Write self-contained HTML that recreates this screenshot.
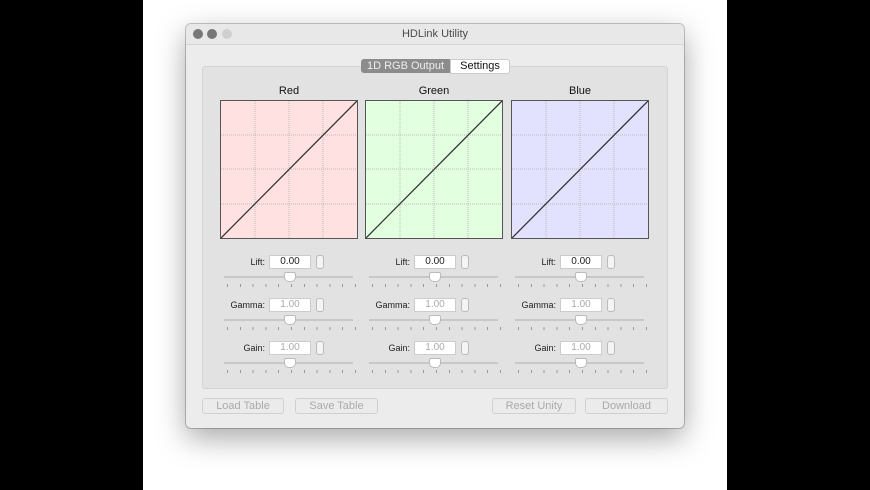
<html><head><style>
body{margin:0;width:870px;height:490px;background:#000;position:relative;overflow:hidden;font-family:"Liberation Sans",sans-serif;}
.a{position:absolute}
.white{left:143px;top:0;width:584px;height:490px;background:#fff}
.win{left:186px;top:24px;width:498px;height:404px;background:#ececec;border-radius:5px;box-shadow:0 10px 30px rgba(0,0,0,.35),0 0 0 1px #c8c8c8}
.title{left:0;top:0;width:498px;height:20px;border-bottom:1px solid #d4d4d4;background:#e8e8e8;border-radius:5px 5px 0 0;font-size:11px;color:#4a4a4a;text-align:center;line-height:20px}
.dot{width:10px;height:10px;border-radius:50%;top:5px;background:#777}
.box{left:16px;top:42px;width:464px;height:321px;background:#e2e2e2;border:1px solid #d3d3d3;border-radius:3px}
.lbl{font-size:11px;color:#111;text-align:center;width:138px}
.g{width:136px;height:137px;border:1px solid #555}
.btn{height:14px;border:1px solid #d0d0d0;border-radius:3px;background:#ebebeb;color:#aaa;font-size:11px;text-align:center;line-height:14px}
.f{font-size:9px;color:#222;text-align:right;width:50px}
.tb{width:40px;height:12px;background:#fff;border:1px solid #ccc;font-size:10px;text-align:center;line-height:12px}
.st{width:6px;height:12px;border:1px solid #bbb;border-radius:3px;background:#f4f4f4}
.sl{height:2px;width:129px;background:#c8c8c8}
.th{width:10px;height:8px;background:#fff;border:1px solid #bbb;border-radius:2px 2px 5px 5px}
.tk{height:3px;width:129px;background:repeating-linear-gradient(90deg,#999 0 1px,transparent 1px 12.8px)}
</style></head><body>
<div class="a white"></div>
<div class="a win">
<div class="a title">HDLink Utility</div>
<div class="a dot" style="left:7px"></div><div class="a dot" style="left:21px"></div><div class="a dot" style="left:36px;background:#d0d0d0"></div>
<div class="a box"></div>
<div class="a" style="left:175px;top:35px;width:89px;height:14px;background:#8c8c8c;border-radius:3px 0 0 3px;color:#eee;font-size:11px;text-align:center;line-height:14px">1D RGB Output</div>
<div class="a" style="left:264px;top:35px;width:58px;height:13px;background:#fff;border:1px solid #ccc;border-radius:0 3px 3px 0;color:#111;font-size:11px;text-align:center;line-height:13px">Settings</div>
<div class="a btn" style="left:16px;top:374px;width:80px">Load Table</div>
<div class="a btn" style="left:109px;top:374px;width:81px">Save Table</div>
<div class="a btn" style="left:306px;top:374px;width:82px">Reset Unity</div>
<div class="a btn" style="left:399px;top:374px;width:81px">Download</div>
</div>
<div id="cols"></div>
<script>
var d=[["Red","#ffe1e1",220],["Green","#e2ffe0",365],["Blue","#e2e2ff",511]],h="";
d.forEach(function(c){var x=c[2];
h+='<div class="a lbl" style="left:'+x+'px;top:85px">'+c[0]+'</div>';
h+='<div class="a g" style="left:'+x+'px;top:100px;background:'+c[1]+'"><svg width="136" height="137"><g stroke="#bbb" stroke-dasharray="1 1"><line x1="34" y1="0" x2="34" y2="137"/><line x1="68" y1="0" x2="68" y2="137"/><line x1="102" y1="0" x2="102" y2="137"/><line x1="0" y1="34" x2="136" y2="34"/><line x1="0" y1="68" x2="136" y2="68"/><line x1="0" y1="103" x2="136" y2="103"/></g><line x1="0" y1="137" x2="136" y2="0" stroke="#333" stroke-width="1.3"/></svg></div>';
[["Lift:","0.00",255,"#222"],["Gamma:","1.00",298,"#aaa"],["Gain:","1.00",341,"#aaa"]].forEach(function(r){var y=r[2];
h+='<div class="a f" style="left:'+(x-5)+'px;top:'+(y+2)+'px">'+r[0]+'</div>';
h+='<div class="a tb" style="left:'+(x+49)+'px;top:'+y+'px;color:'+r[3]+'">'+r[1]+'</div>';
h+='<div class="a st" style="left:'+(x+96)+'px;top:'+y+'px"></div>';
h+='<div class="a sl" style="left:'+(x+4)+'px;top:'+(y+21)+'px"></div>';
h+='<div class="a th" style="left:'+(x+64)+'px;top:'+(y+17)+'px"></div>';
h+='<div class="a tk" style="left:'+(x+7)+'px;top:'+(y+29)+'px"></div>';});});
document.getElementById("cols").innerHTML=h;
</script>
</body></html>
